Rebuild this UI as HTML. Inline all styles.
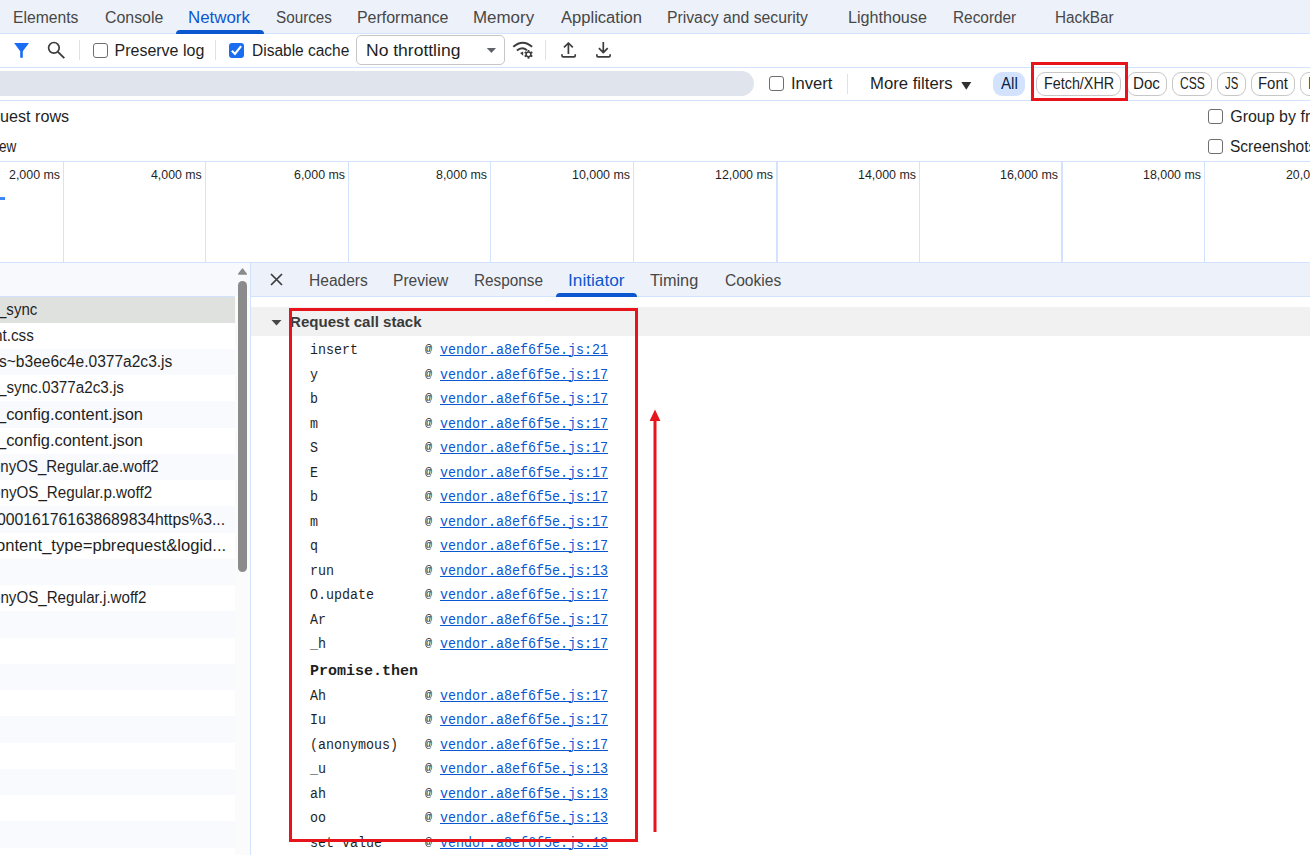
<!DOCTYPE html>
<html><head><meta charset="utf-8"><title>DevTools</title>
<style>
html,body{margin:0;padding:0;}
body{width:1310px;height:855px;overflow:hidden;position:relative;background:#fff;font-family:"Liberation Sans",sans-serif;color:#1f1f1f;}
.t{position:absolute;white-space:pre;line-height:20px;color:#1f1f1f;transform-origin:0 0;}
.s{font-family:"Liberation Sans",sans-serif;}
.m{font-family:"Liberation Mono",monospace;}
.r{position:absolute;}
.cb{position:absolute;width:15px;height:15px;box-sizing:border-box;border:1.5px solid #6e6e6e;border-radius:3px;background:#fff;}
.cb.on{border:none;background:#1a6cf0;}
.cb svg{display:block;}
</style></head><body>
<div class="r" style="left:0px;top:0px;width:1310px;height:33px;background:#edf2fa;"></div>
<div class="r" style="left:0px;top:33px;width:1310px;height:1px;background:#d3e3fd;"></div>
<span class="t s" style="left:13.21px;top:8.00px;font-size:16px;transform:scaleX(0.9799);color:#474747;">Elements</span>
<span class="t s" style="left:104.69px;top:8.00px;font-size:16px;transform:scaleX(0.9934);color:#474747;">Console</span>
<span class="t s" style="left:188.12px;top:8.00px;font-size:16px;transform:scaleX(1.0542);color:#0b57d0;">Network</span>
<span class="t s" style="left:276.21px;top:8.00px;font-size:16px;transform:scaleX(0.9531);color:#474747;">Sources</span>
<span class="t s" style="left:356.89px;top:8.00px;font-size:16px;color:#474747;">Performance</span>
<span class="t s" style="left:473.41px;top:8.00px;font-size:16px;transform:scaleX(1.0578);color:#474747;">Memory</span>
<span class="t s" style="left:561.07px;top:8.00px;font-size:16px;transform:scaleX(1.0349);color:#474747;">Application</span>
<span class="t s" style="left:667.31px;top:8.00px;font-size:16px;transform:scaleX(0.9843);color:#474747;">Privacy and security</span>
<span class="t s" style="left:847.58px;top:8.00px;font-size:16px;transform:scaleX(1.0070);color:#474747;">Lighthouse</span>
<span class="t s" style="left:952.74px;top:8.00px;font-size:16px;transform:scaleX(0.9607);color:#474747;">Recorder</span>
<span class="t s" style="left:1055.15px;top:8.00px;font-size:16px;transform:scaleX(0.9553);color:#474747;">HackBar</span>
<div class="r" style="left:176px;top:30px;width:88px;height:4px;background:#0b57d0;border-radius:4px 4px 0 0;"></div>
<div class="r" style="left:0px;top:67px;width:1310px;height:1px;background:#d3e3fd;"></div>
<div class="r" style="left:79px;top:40px;width:1px;height:20px;background:#d3e3fd;"></div>
<div class="r" style="left:215px;top:40px;width:1px;height:20px;background:#d3e3fd;"></div>
<div class="r" style="left:545px;top:40px;width:1px;height:20px;background:#d3e3fd;"></div>
<svg class="r" style="left:0;top:34px" width="1310" height="33" viewBox="0 34 1310 33">
<path d="M14.1 43.1 L29 43.1 L22.8 51.3 L22.8 57.7 L20.2 57.7 L20.2 51.3 Z" fill="#1a6cf5"/>
<circle cx="53.9" cy="47.8" r="5.3" fill="none" stroke="#3c3c3c" stroke-width="1.7"/>
<path d="M57.9 51.8 L64.3 58.2" stroke="#3c3c3c" stroke-width="1.9" fill="none"/>
<g fill="none" stroke="#3c3c3c" stroke-width="1.7" stroke-linejoin="round">
<path d="M513.3 46.8 Q522.7 38.6 532.1 46.8" stroke-width="2"/>
<path d="M516.9 50.6 Q521.9 46.2 527 50.2" stroke-width="2"/>
<path d="M568.4 53.9 L568.4 42.6 M564 47.4 L568.4 43 L572.8 47.4"/>
<path d="M562 54.2 V55.7 Q562 56.9 563.2 56.9 H574 Q575.2 56.9 575.2 55.7 V54.2"/>
<path d="M603.3 42 L603.3 52.8 M598.9 48.2 L603.3 52.6 L607.7 48.2"/>
<path d="M596.9 54.2 V55.7 Q596.9 56.9 598.1 56.9 H608.9 Q610.1 56.9 610.1 55.7 V54.2"/>
</g>
<path d="M520 53 L523.2 51.6 L523.2 55.8 Z" fill="#3c3c3c"/>
<g transform="translate(528.5 54.3)"><circle r="2.4" fill="none" stroke="#3c3c3c" stroke-width="1.5"/>
<g stroke="#3c3c3c" stroke-width="1.8"><path d="M0 -2.6V-4.4M0 2.6V4.4M2.25 -1.3L3.8 -2.2M-2.25 -1.3L-3.8 -2.2M2.25 1.3L3.8 2.2M-2.25 1.3L-3.8 2.2"/></g></g>
</svg>
<div class="cb" style="left:93px;top:43px;"></div>
<span class="t s" style="left:114.49px;top:41.00px;font-size:16px;">Preserve log</span>
<div class="cb on" style="left:229px;top:43px;"><svg width="15" height="15" viewBox="0 0 15 15"><path d="M2.9 7.7 L6 10.9 L12.1 3.1" fill="none" stroke="#fff" stroke-width="2.2"/></svg></div>
<span class="t s" style="left:251.63px;top:41.00px;font-size:16px;transform:scaleX(0.9688);">Disable cache</span>
<div class="r" style="left:356px;top:35px;width:149px;height:30px;box-sizing:border-box;border:1px solid #c4c7c5;border-radius:5px;background:#fff;"></div>
<span class="t s" style="left:366.46px;top:41.00px;font-size:16px;transform:scaleX(1.0939);">No throttling</span>
<svg class="r" style="left:486px;top:48px" width="12" height="6" viewBox="0 0 12 6"><path d="M0.8 0 L10 0 L5.4 5 Z" fill="#5f6368"/></svg>
<div class="r" style="left:-20px;top:71px;width:774px;height:25px;background:#e0e4ed;border-radius:13px;"></div>
<div class="r" style="left:0px;top:100px;width:1310px;height:1px;background:#d3e3fd;"></div>
<div class="cb" style="left:769px;top:76px;"></div>
<span class="t s" style="left:791.07px;top:74.00px;font-size:16px;transform:scaleX(1.0359);">Invert</span>
<div class="r" style="left:847px;top:74px;width:1px;height:20px;background:#d3e3fd;"></div>
<span class="t s" style="left:870.23px;top:74.00px;font-size:16px;transform:scaleX(1.0436);">More filters</span>
<svg class="r" style="left:961px;top:82px" width="11" height="8" viewBox="0 0 11 8"><path d="M0.3 0 L10.3 0 L5.3 7.8 Z" fill="#303030"/></svg>
<div class="r" style="left:993px;top:72px;width:32px;height:24px;background:#d3e3fd;border-radius:9px;"></div>
<span class="t s" style="left:1001.37px;top:74.00px;font-size:16px;transform:scaleX(0.9473);color:#041e49;">All</span>
<div class="r" style="left:1036px;top:72px;width:85px;height:24px;box-sizing:border-box;border:1px solid #c7c7c7;border-radius:9px;background:#fff;"></div>
<span class="t s" style="left:1043.62px;top:74.00px;font-size:16px;transform:scaleX(0.8965);">Fetch/XHR</span>
<div class="r" style="left:1127px;top:72px;width:40px;height:24px;box-sizing:border-box;border:1px solid #c7c7c7;border-radius:9px;background:#fff;"></div>
<span class="t s" style="left:1133.16px;top:74.00px;font-size:16px;transform:scaleX(0.9469);">Doc</span>
<div class="r" style="left:1172px;top:72px;width:40px;height:24px;box-sizing:border-box;border:1px solid #c7c7c7;border-radius:9px;background:#fff;"></div>
<span class="t s" style="left:1179.59px;top:74.00px;font-size:16px;transform:scaleX(0.7559);">CSS</span>
<div class="r" style="left:1217px;top:72px;width:29px;height:24px;box-sizing:border-box;border:1px solid #c7c7c7;border-radius:9px;background:#fff;"></div>
<span class="t s" style="left:1225.02px;top:74.00px;font-size:16px;transform:scaleX(0.7067);">JS</span>
<div class="r" style="left:1251px;top:72px;width:44px;height:24px;box-sizing:border-box;border:1px solid #c7c7c7;border-radius:9px;background:#fff;"></div>
<span class="t s" style="left:1257.88px;top:74.00px;font-size:16px;transform:scaleX(0.9318);">Font</span>
<div class="r" style="left:1300px;top:72px;width:50px;height:24px;box-sizing:border-box;border:1px solid #c7c7c7;border-radius:9px;background:#fff;"></div>
<span class="t s" style="left:1307.72px;top:74.00px;font-size:16px;">Img</span>
<div class="r" style="left:1031px;top:62px;width:97px;height:39px;box-sizing:border-box;border:3px solid #e8141c;"></div>
<span class="t s" style="left:0.35px;top:107.00px;font-size:16px;transform:scaleX(1.0097);">uest rows</span>
<span class="t s" style="left:-0.68px;top:137.00px;font-size:16px;transform:scaleX(0.8479);">ew</span>
<div class="cb" style="left:1208px;top:109px;"></div>
<div class="cb" style="left:1208px;top:139px;"></div>
<span class="t s" style="left:1230.19px;top:107.00px;font-size:16px;">Group by frame</span>
<span class="t s" style="left:1230.30px;top:137.00px;font-size:16px;transform:scaleX(0.9701);">Screenshots</span>
<div class="r" style="left:0px;top:161px;width:1310px;height:1px;background:#d3e3fd;"></div>
<div class="r" style="left:0px;top:262px;width:1310px;height:1px;background:#d3e3fd;"></div>
<div class="r" style="left:63px;top:162px;width:1px;height:100px;background:#d3e3fd;"></div>
<span class="t s" style="left:8.78px;top:165.00px;font-size:13px;transform:scaleX(0.9551);">2,000 ms</span>
<div class="r" style="left:205px;top:162px;width:1px;height:100px;background:#d3e3fd;"></div>
<span class="t s" style="left:151.12px;top:165.00px;font-size:13px;transform:scaleX(0.9487);">4,000 ms</span>
<div class="r" style="left:348px;top:162px;width:1px;height:100px;background:#d3e3fd;"></div>
<span class="t s" style="left:293.77px;top:165.00px;font-size:13px;transform:scaleX(0.9552);">6,000 ms</span>
<div class="r" style="left:490px;top:162px;width:1px;height:100px;background:#d3e3fd;"></div>
<span class="t s" style="left:435.86px;top:165.00px;font-size:13px;transform:scaleX(0.9535);">8,000 ms</span>
<div class="r" style="left:633px;top:162px;width:1px;height:100px;background:#d3e3fd;"></div>
<span class="t s" style="left:571.85px;top:165.00px;font-size:13px;transform:scaleX(0.9554);">10,000 ms</span>
<div class="r" style="left:776px;top:162px;width:2px;height:100px;background:#d3e3fd;"></div>
<span class="t s" style="left:714.85px;top:165.00px;font-size:13px;transform:scaleX(0.9554);">12,000 ms</span>
<div class="r" style="left:919px;top:162px;width:1px;height:100px;background:#d3e3fd;"></div>
<span class="t s" style="left:857.85px;top:165.00px;font-size:13px;transform:scaleX(0.9554);">14,000 ms</span>
<div class="r" style="left:1061px;top:162px;width:2px;height:100px;background:#d3e3fd;"></div>
<span class="t s" style="left:999.85px;top:165.00px;font-size:13px;transform:scaleX(0.9554);">16,000 ms</span>
<div class="r" style="left:1204px;top:162px;width:1px;height:100px;background:#d3e3fd;"></div>
<span class="t s" style="left:1142.85px;top:165.00px;font-size:13px;transform:scaleX(0.9554);">18,000 ms</span>
<span class="t s" style="left:1285.78px;top:165.00px;font-size:13px;transform:scaleX(0.9500);">20,000 ms</span>
<div class="r" style="left:0px;top:197px;width:4.5px;height:3px;background:#4285f4;"></div>
<div class="r" style="left:0px;top:263px;width:250px;height:33px;background:#f8f9fd;"></div>
<div class="r" style="left:0px;top:296px;width:235px;height:1px;background:#d3e3fd;"></div>
<div class="r" style="left:235px;top:297px;width:15px;height:558px;background:#fbfbfc;"></div>
<div class="r" style="left:250px;top:263px;width:1px;height:592px;background:#d3e3fd;"></div>
<div class="r" style="left:0px;top:297px;width:235px;height:26px;background:#dfe1df;"></div>
<div class="r" style="left:0px;top:349px;width:235px;height:26px;background:#f8fafd;"></div>
<div class="r" style="left:0px;top:401px;width:235px;height:27px;background:#f8fafd;"></div>
<div class="r" style="left:0px;top:454px;width:235px;height:26px;background:#f8fafd;"></div>
<div class="r" style="left:0px;top:506px;width:235px;height:27px;background:#f8fafd;"></div>
<div class="r" style="left:0px;top:559px;width:235px;height:26px;background:#f8fafd;"></div>
<div class="r" style="left:0px;top:611px;width:235px;height:27px;background:#f8fafd;"></div>
<div class="r" style="left:0px;top:664px;width:235px;height:26px;background:#f8fafd;"></div>
<div class="r" style="left:0px;top:716px;width:235px;height:27px;background:#f8fafd;"></div>
<div class="r" style="left:0px;top:769px;width:235px;height:26px;background:#f8fafd;"></div>
<div class="r" style="left:0px;top:821px;width:235px;height:27px;background:#f8fafd;"></div>
<span class="t s" style="left:-2.38px;top:300.00px;font-size:16px;transform:scaleX(0.9397);">_sync</span>
<span class="t s" style="left:-6.42px;top:326.00px;font-size:16px;transform:scaleX(0.9542);">nt.css</span>
<span class="t s" style="left:-0.57px;top:352.00px;font-size:16px;transform:scaleX(0.9718);">s~b3ee6c4e.0377a2c3.js</span>
<span class="t s" style="left:-2.48px;top:378.00px;font-size:16px;transform:scaleX(0.9502);">_sync.0377a2c3.js</span>
<span class="t s" style="left:-2.73px;top:405.00px;font-size:16px;transform:scaleX(1.0258);">_config.content.json</span>
<span class="t s" style="left:-2.73px;top:431.00px;font-size:16px;transform:scaleX(1.0258);">_config.content.json</span>
<span class="t s" style="left:-7.95px;top:457.00px;font-size:16px;transform:scaleX(0.9386);">onyOS_Regular.ae.woff2</span>
<span class="t s" style="left:-8.05px;top:483.00px;font-size:16px;transform:scaleX(0.9490);">onyOS_Regular.p.woff2</span>
<span class="t s" style="left:-3.39px;top:510.00px;font-size:16px;transform:scaleX(0.9862);">000161761638689834https%3...</span>
<span class="t s" style="left:-4.33px;top:536.00px;font-size:16px;transform:scaleX(1.0369);">ontent_type=pbrequest&amp;logid...</span>
<span class="t s" style="left:-8.02px;top:588.00px;font-size:16px;transform:scaleX(0.9456);">onyOS_Regular.j.woff2</span>
<svg class="r" style="left:237px;top:267px" width="11" height="9" viewBox="0 0 11 9"><path d="M1.8 7 L5.5 2.2 L9.2 7 Z" fill="#8b8b8b" stroke="#8b8b8b" stroke-width="1.6" stroke-linejoin="round"/></svg>
<div class="r" style="left:238px;top:281px;width:9px;height:291px;background:#8b8b8b;border-radius:5px;"></div>
<div class="r" style="left:251px;top:263px;width:1059px;height:33px;background:#edf2fa;"></div>
<div class="r" style="left:251px;top:296px;width:1059px;height:1px;background:#d3e3fd;"></div>
<svg class="r" style="left:270px;top:273px" width="13" height="13" viewBox="0 0 13 13"><path d="M1 1 L12 12 M12 1 L1 12" stroke="#3c3c3c" stroke-width="1.7" fill="none"/></svg>
<span class="t s" style="left:308.52px;top:271.00px;font-size:16px;transform:scaleX(0.9729);color:#474747;">Headers</span>
<span class="t s" style="left:392.92px;top:271.00px;font-size:16px;transform:scaleX(0.9724);color:#474747;">Preview</span>
<span class="t s" style="left:474.34px;top:271.00px;font-size:16px;transform:scaleX(0.9568);color:#474747;">Response</span>
<span class="t s" style="left:568.01px;top:271.00px;font-size:16px;transform:scaleX(1.0783);color:#0b57d0;">Initiator</span>
<span class="t s" style="left:650.33px;top:271.00px;font-size:16px;transform:scaleX(1.0168);color:#474747;">Timing</span>
<span class="t s" style="left:724.91px;top:271.00px;font-size:16px;transform:scaleX(0.9714);color:#474747;">Cookies</span>
<div class="r" style="left:556px;top:293px;width:81px;height:4px;background:#0b57d0;border-radius:4px 4px 0 0;"></div>
<div class="r" style="left:251px;top:307px;width:1059px;height:29px;background:#f1f1f1;"></div>
<svg class="r" style="left:271px;top:320px" width="11" height="6" viewBox="0 0 11 6"><path d="M0.5 0 L10.5 0 L5.5 5.5 Z" fill="#474747"/></svg>
<span class="t s" style="left:290.19px;top:312.00px;font-size:15.2px;transform:scaleX(0.9928);color:#3b3b3b;font-weight:700;">Request call stack</span>
<span class="t m" style="left:310.00px;top:340.00px;font-size:14px;transform:scaleX(0.9522);">insert</span>
<span class="t m" style="left:425.15px;top:339.00px;font-size:11.5px;transform:scaleX(1.0265);">@</span>
<span class="t m" style="left:440.00px;top:340.00px;font-size:14px;color:#0b57d0;transform:scaleX(0.9522);text-decoration:underline;text-underline-offset:0.5px;text-decoration-thickness:1px;">vendor.a8ef6f5e.js:21</span>
<span class="t m" style="left:310.00px;top:365.00px;font-size:14px;transform:scaleX(0.9522);">y</span>
<span class="t m" style="left:425.15px;top:364.00px;font-size:11.5px;transform:scaleX(1.0265);">@</span>
<span class="t m" style="left:440.00px;top:365.00px;font-size:14px;color:#0b57d0;transform:scaleX(0.9522);text-decoration:underline;text-underline-offset:0.5px;text-decoration-thickness:1px;">vendor.a8ef6f5e.js:17</span>
<span class="t m" style="left:310.00px;top:389.00px;font-size:14px;transform:scaleX(0.9522);">b</span>
<span class="t m" style="left:425.15px;top:388.00px;font-size:11.5px;transform:scaleX(1.0265);">@</span>
<span class="t m" style="left:440.00px;top:389.00px;font-size:14px;color:#0b57d0;transform:scaleX(0.9522);text-decoration:underline;text-underline-offset:0.5px;text-decoration-thickness:1px;">vendor.a8ef6f5e.js:17</span>
<span class="t m" style="left:310.00px;top:414.00px;font-size:14px;transform:scaleX(0.9522);">m</span>
<span class="t m" style="left:425.15px;top:413.00px;font-size:11.5px;transform:scaleX(1.0265);">@</span>
<span class="t m" style="left:440.00px;top:414.00px;font-size:14px;color:#0b57d0;transform:scaleX(0.9522);text-decoration:underline;text-underline-offset:0.5px;text-decoration-thickness:1px;">vendor.a8ef6f5e.js:17</span>
<span class="t m" style="left:310.00px;top:438.00px;font-size:14px;transform:scaleX(0.9522);">S</span>
<span class="t m" style="left:425.15px;top:437.00px;font-size:11.5px;transform:scaleX(1.0265);">@</span>
<span class="t m" style="left:440.00px;top:438.00px;font-size:14px;color:#0b57d0;transform:scaleX(0.9522);text-decoration:underline;text-underline-offset:0.5px;text-decoration-thickness:1px;">vendor.a8ef6f5e.js:17</span>
<span class="t m" style="left:310.00px;top:463.00px;font-size:14px;transform:scaleX(0.9522);">E</span>
<span class="t m" style="left:425.15px;top:462.00px;font-size:11.5px;transform:scaleX(1.0265);">@</span>
<span class="t m" style="left:440.00px;top:463.00px;font-size:14px;color:#0b57d0;transform:scaleX(0.9522);text-decoration:underline;text-underline-offset:0.5px;text-decoration-thickness:1px;">vendor.a8ef6f5e.js:17</span>
<span class="t m" style="left:310.00px;top:487.00px;font-size:14px;transform:scaleX(0.9522);">b</span>
<span class="t m" style="left:425.15px;top:486.00px;font-size:11.5px;transform:scaleX(1.0265);">@</span>
<span class="t m" style="left:440.00px;top:487.00px;font-size:14px;color:#0b57d0;transform:scaleX(0.9522);text-decoration:underline;text-underline-offset:0.5px;text-decoration-thickness:1px;">vendor.a8ef6f5e.js:17</span>
<span class="t m" style="left:310.00px;top:512.00px;font-size:14px;transform:scaleX(0.9522);">m</span>
<span class="t m" style="left:425.15px;top:511.00px;font-size:11.5px;transform:scaleX(1.0265);">@</span>
<span class="t m" style="left:440.00px;top:512.00px;font-size:14px;color:#0b57d0;transform:scaleX(0.9522);text-decoration:underline;text-underline-offset:0.5px;text-decoration-thickness:1px;">vendor.a8ef6f5e.js:17</span>
<span class="t m" style="left:310.00px;top:536.00px;font-size:14px;transform:scaleX(0.9522);">q</span>
<span class="t m" style="left:425.15px;top:535.00px;font-size:11.5px;transform:scaleX(1.0265);">@</span>
<span class="t m" style="left:440.00px;top:536.00px;font-size:14px;color:#0b57d0;transform:scaleX(0.9522);text-decoration:underline;text-underline-offset:0.5px;text-decoration-thickness:1px;">vendor.a8ef6f5e.js:17</span>
<span class="t m" style="left:310.00px;top:561.00px;font-size:14px;transform:scaleX(0.9522);">run</span>
<span class="t m" style="left:425.15px;top:560.00px;font-size:11.5px;transform:scaleX(1.0265);">@</span>
<span class="t m" style="left:440.00px;top:561.00px;font-size:14px;color:#0b57d0;transform:scaleX(0.9522);text-decoration:underline;text-underline-offset:0.5px;text-decoration-thickness:1px;">vendor.a8ef6f5e.js:13</span>
<span class="t m" style="left:310.00px;top:585.00px;font-size:14px;transform:scaleX(0.9522);">O.update</span>
<span class="t m" style="left:425.15px;top:584.00px;font-size:11.5px;transform:scaleX(1.0265);">@</span>
<span class="t m" style="left:440.00px;top:585.00px;font-size:14px;color:#0b57d0;transform:scaleX(0.9522);text-decoration:underline;text-underline-offset:0.5px;text-decoration-thickness:1px;">vendor.a8ef6f5e.js:17</span>
<span class="t m" style="left:310.00px;top:610.00px;font-size:14px;transform:scaleX(0.9522);">Ar</span>
<span class="t m" style="left:425.15px;top:609.00px;font-size:11.5px;transform:scaleX(1.0265);">@</span>
<span class="t m" style="left:440.00px;top:610.00px;font-size:14px;color:#0b57d0;transform:scaleX(0.9522);text-decoration:underline;text-underline-offset:0.5px;text-decoration-thickness:1px;">vendor.a8ef6f5e.js:17</span>
<span class="t m" style="left:310.00px;top:634.00px;font-size:14px;transform:scaleX(0.9522);">_h</span>
<span class="t m" style="left:425.15px;top:633.00px;font-size:11.5px;transform:scaleX(1.0265);">@</span>
<span class="t m" style="left:440.00px;top:634.00px;font-size:14px;color:#0b57d0;transform:scaleX(0.9522);text-decoration:underline;text-underline-offset:0.5px;text-decoration-thickness:1px;">vendor.a8ef6f5e.js:17</span>
<span class="t m" style="left:310.00px;top:661.00px;font-size:14px;font-weight:700;transform:scaleX(1.0713);">Promise.then</span>
<span class="t m" style="left:310.00px;top:686.00px;font-size:14px;transform:scaleX(0.9522);">Ah</span>
<span class="t m" style="left:425.15px;top:685.00px;font-size:11.5px;transform:scaleX(1.0265);">@</span>
<span class="t m" style="left:440.00px;top:686.00px;font-size:14px;color:#0b57d0;transform:scaleX(0.9522);text-decoration:underline;text-underline-offset:0.5px;text-decoration-thickness:1px;">vendor.a8ef6f5e.js:17</span>
<span class="t m" style="left:310.00px;top:710.00px;font-size:14px;transform:scaleX(0.9522);">Iu</span>
<span class="t m" style="left:425.15px;top:709.00px;font-size:11.5px;transform:scaleX(1.0265);">@</span>
<span class="t m" style="left:440.00px;top:710.00px;font-size:14px;color:#0b57d0;transform:scaleX(0.9522);text-decoration:underline;text-underline-offset:0.5px;text-decoration-thickness:1px;">vendor.a8ef6f5e.js:17</span>
<span class="t m" style="left:310.00px;top:735.00px;font-size:14px;transform:scaleX(0.9522);">(anonymous)</span>
<span class="t m" style="left:425.15px;top:734.00px;font-size:11.5px;transform:scaleX(1.0265);">@</span>
<span class="t m" style="left:440.00px;top:735.00px;font-size:14px;color:#0b57d0;transform:scaleX(0.9522);text-decoration:underline;text-underline-offset:0.5px;text-decoration-thickness:1px;">vendor.a8ef6f5e.js:17</span>
<span class="t m" style="left:310.00px;top:759.00px;font-size:14px;transform:scaleX(0.9522);">_u</span>
<span class="t m" style="left:425.15px;top:758.00px;font-size:11.5px;transform:scaleX(1.0265);">@</span>
<span class="t m" style="left:440.00px;top:759.00px;font-size:14px;color:#0b57d0;transform:scaleX(0.9522);text-decoration:underline;text-underline-offset:0.5px;text-decoration-thickness:1px;">vendor.a8ef6f5e.js:13</span>
<span class="t m" style="left:310.00px;top:784.00px;font-size:14px;transform:scaleX(0.9522);">ah</span>
<span class="t m" style="left:425.15px;top:783.00px;font-size:11.5px;transform:scaleX(1.0265);">@</span>
<span class="t m" style="left:440.00px;top:784.00px;font-size:14px;color:#0b57d0;transform:scaleX(0.9522);text-decoration:underline;text-underline-offset:0.5px;text-decoration-thickness:1px;">vendor.a8ef6f5e.js:13</span>
<span class="t m" style="left:310.00px;top:808.00px;font-size:14px;transform:scaleX(0.9522);">oo</span>
<span class="t m" style="left:425.15px;top:807.00px;font-size:11.5px;transform:scaleX(1.0265);">@</span>
<span class="t m" style="left:440.00px;top:808.00px;font-size:14px;color:#0b57d0;transform:scaleX(0.9522);text-decoration:underline;text-underline-offset:0.5px;text-decoration-thickness:1px;">vendor.a8ef6f5e.js:13</span>
<span class="t m" style="left:310.00px;top:833.00px;font-size:14px;transform:scaleX(0.9522);">set value</span>
<span class="t m" style="left:425.15px;top:832.00px;font-size:11.5px;transform:scaleX(1.0265);">@</span>
<span class="t m" style="left:440.00px;top:833.00px;font-size:14px;color:#0b57d0;transform:scaleX(0.9522);text-decoration:underline;text-underline-offset:0.5px;text-decoration-thickness:1px;">vendor.a8ef6f5e.js:13</span>
<div class="r" style="left:289px;top:308px;width:349px;height:534px;box-sizing:border-box;border:3px solid #e8141c;"></div>
<svg class="r" style="left:645px;top:405px" width="20" height="430" viewBox="0 0 20 430"><path d="M10 10 L10 427" stroke="#e8141c" stroke-width="3" fill="none"/><path d="M10 4.5 L4.6 16 L15.4 16 Z" fill="#e8141c"/></svg>
</body></html>
